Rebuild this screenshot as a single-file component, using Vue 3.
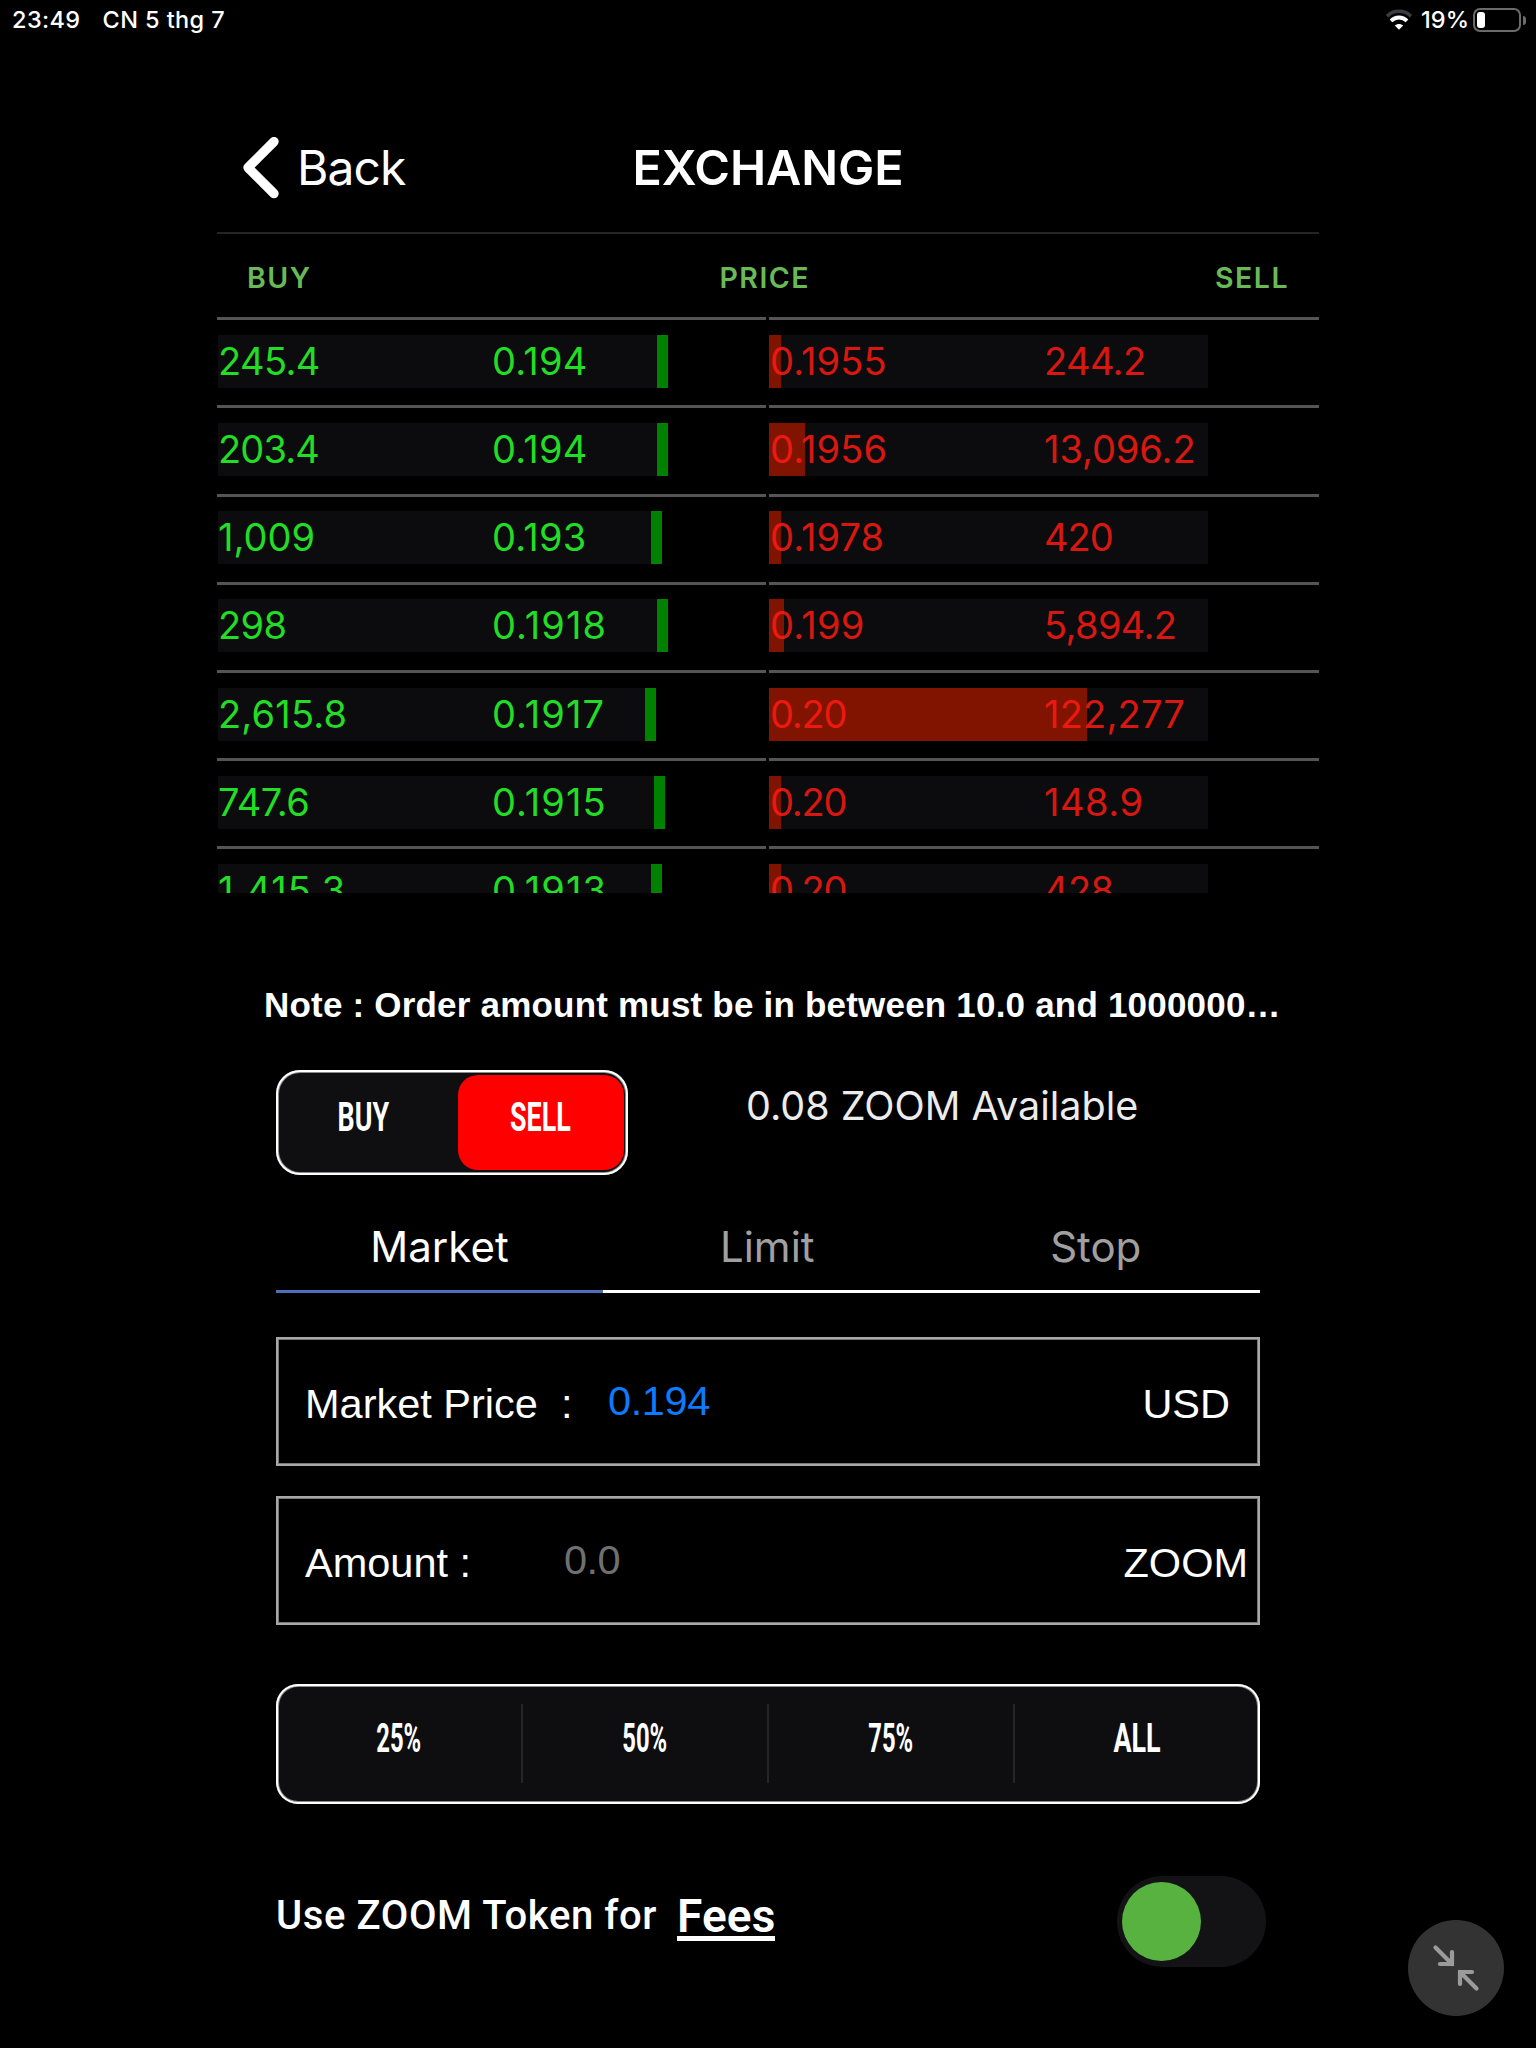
<template>
  <div class="screen">
    <div class="status-bar">
      <span class="status-time">23:49</span>
      <span class="status-date">CN 5 thg 7</span>
      <svg class="wifi" width="28" height="22" viewBox="0 0 28 22">
        <path d="M2 7.2 C8.5 0.6 19.5 0.6 26 7.2" fill="none" stroke="#3c3c3e" stroke-width="3.4" />
        <path d="M6 11.8 C10.5 7.4 17.5 7.4 22 11.8" fill="none" stroke="#fff" stroke-width="3.8" />
        <path d="M14 20.8 L9.8 16.6 C12 14.3 16 14.3 18.2 16.6 Z" fill="#fff" />
      </svg>
      <span class="status-percent">19%</span>
      <div class="battery"><div class="battery-level"></div></div>
      <div class="battery-cap"></div>
    </div>

    <div class="panel">
      <header class="nav">
        <button class="back">
          <svg width="38" height="62" viewBox="0 0 38 62">
            <path d="M33 4.6 L7 30.6 L33 56.6" fill="none" stroke="#fff" stroke-width="9.4" stroke-linecap="round" stroke-linejoin="round" />
          </svg>
          <span>Back</span>
        </button>
        <h1 class="title">EXCHANGE</h1>
      </header>

      <div class="book-head">
        <span>BUY</span>
        <span>PRICE</span>
        <span>SELL</span>
      </div>

      <div class="book">
        <div v-for="(row, i) in orders" :key="i" class="book-row">
          <div class="half">
            <div class="band buy" :style="{ width: row.buyWidth + 'px' }">
              <span class="first" :style="spacing(row.buyAmount)">{{ row.buyAmount }}</span>
              <span :style="spacing(row.buyPrice)">{{ row.buyPrice }}</span>
            </div>
          </div>
          <div class="half">
            <div class="band sell">
              <div class="depth" :style="{ width: row.depth + 'px' }"></div>
              <span class="first" :style="spacing(row.sellPrice)">{{ row.sellPrice }}</span>
              <span :style="spacing(row.sellAmount)">{{ row.sellAmount }}</span>
            </div>
          </div>
        </div>
      </div>
    </div>

    <p class="note">Note : Order amount must be in between 10.0 and 1000000…</p>

    <div class="form">
      <div class="side-row">
        <div class="side-switch">
          <button class="side-buy" :class="{ active: side === 'BUY' }" @click="side = 'BUY'"><span class="din">BUY</span></button>
          <button class="side-sell" :class="{ active: side === 'SELL' }" @click="side = 'SELL'"><span class="din">SELL</span></button>
        </div>
        <span class="available">0.08 ZOOM Available</span>
      </div>

      <div class="tabs">
        <button v-for="t in tabs" :key="t" :class="{ active: tab === t }" @click="tab = t">{{ t }}</button>
      </div>

      <div class="field">
        <span class="label price-label">Market Price&nbsp; :</span>
        <span class="value price">0.194</span>
        <span class="unit usd">USD</span>
      </div>
      <div class="field">
        <span class="label amount-label">Amount :</span>
        <span class="value amount">0.0</span>
        <span class="unit">ZOOM</span>
      </div>

      <div class="percents">
        <button v-for="p in percents" :key="p"><span class="din" :class="{ narrow: p !== 'ALL' }">{{ p }}</span></button>
      </div>

      <div class="fees-row">
        <span class="fees-text">Use ZOOM Token for</span>
        <a class="fees-link">Fees</a>
        <div class="toggle"><div class="knob"></div></div>
      </div>
    </div>

    <button class="shrink">
      <svg width="96" height="96" viewBox="0 0 96 96" fill="none" stroke="#9b9b9b" stroke-width="4.2" stroke-linecap="round">
        <path d="M27.5 27.5 L44 44 M44 32 V44 H32" />
        <path d="M68.5 68.5 L52 52 M64 52 H52 V64" />
      </svg>
    </button>
  </div>
</template>

<script setup>
import { ref } from 'vue'

const side = ref('SELL')
const tab = ref('Market')
const tabs = ['Market', 'Limit', 'Stop']
const percents = ['25%', '50%', '75%', 'ALL']

const orders = [
  { buyAmount: '245.4', buyPrice: '0.194', buyWidth: 450, sellPrice: '0.1955', sellAmount: '244.2', depth: 12 },
  { buyAmount: '203.4', buyPrice: '0.194', buyWidth: 450, sellPrice: '0.1956', sellAmount: '13,096.2', depth: 36 },
  { buyAmount: '1,009', buyPrice: '0.193', buyWidth: 444, sellPrice: '0.1978', sellAmount: '420', depth: 12 },
  { buyAmount: '298', buyPrice: '0.1918', buyWidth: 450, sellPrice: '0.199', sellAmount: '5,894.2', depth: 15 },
  { buyAmount: '2,615.8', buyPrice: '0.1917', buyWidth: 438, sellPrice: '0.20', sellAmount: '122,277', depth: 318 },
  { buyAmount: '747.6', buyPrice: '0.1915', buyWidth: 447, sellPrice: '0.20', sellAmount: '148.9', depth: 12 },
  { buyAmount: '1,415.3', buyPrice: '0.1913', buyWidth: 444, sellPrice: '0.20', sellAmount: '428', depth: 12 }
]

// 1 is narrow and 0 is wide in Inter, even the numbers out a little
function spacing(text) {
  const ones = text.split('1').length - 1
  const zeros = text.split('0').length - 1
  return { letterSpacing: (-0.6 + (5.6 * ones - 1.2 * zeros) / text.length).toFixed(2) + 'px' }
}
</script>

<style>
body {
  margin: 0;
  background: #000;
}
</style>

<style scoped>
.screen {
  position: relative;
  width: 1536px;
  height: 2048px;
  box-sizing: border-box;
  overflow: hidden;
  background: #000;
  color: #fff;
  font-family: Inter, "Liberation Sans", sans-serif;
}

.screen * {
  box-sizing: border-box;
}

button {
  margin: 0;
  padding: 0;
  border: 0;
  background: none;
  color: inherit;
  font: inherit;
  letter-spacing: inherit;
}

span,
a {
  white-space: nowrap;
}

.status-bar {
  display: flex;
  align-items: center;
  height: 40px;
  padding: 0 10px 0 12px;
  font-size: 23.5px;
  font-weight: 500;
  letter-spacing: 0.4px;
}

.status-bar span {
  padding-bottom: 1px;
}

.status-date {
  margin-left: 22px;
}

.wifi {
  margin-left: auto;
}

.status-bar .status-percent {
  margin-left: 8px;
  letter-spacing: 0;
}

.battery {
  width: 48px;
  height: 24px;
  margin-left: 4px;
  padding: 2px;
  border: 2px solid #6b6b6d;
  border-radius: 7px;
}

.battery-level {
  width: 8px;
  height: 16px;
  border-radius: 3px;
  background: #fff;
}

.battery-cap {
  width: 3px;
  height: 9px;
  margin-left: 2px;
  border-radius: 0 4px 4px 0;
  background: #6b6b6d;
}

.panel {
  width: 1102px;
  margin: 0 auto;
}

.nav {
  display: grid;
  grid-template-columns: 1fr auto 1fr;
  align-items: center;
  height: 194px;
  padding-top: 63px;
  border-bottom: 2px solid #242424;
}

.nav .back {
  display: flex;
  align-items: center;
  gap: 18px;
  padding-left: 24px;
  font-size: 48px;
  letter-spacing: -0.9px;
}

.title {
  margin: 0;
  font-size: 48.5px;
  font-weight: 600;
  line-height: 62px;
  letter-spacing: -0.1px;
}

.book-head {
  display: flex;
  justify-content: space-between;
  align-items: center;
  height: 83px;
  padding: 4px 30px 0 30px;
  color: #69b957;
  font-size: 28.5px;
  font-weight: 600;
  letter-spacing: 1.5px;
}

.book-head span:nth-child(2) {
  padding-left: 3px;
}

.book {
  height: 576px;
  padding-top: 0.2px;
  overflow: hidden;
}

.book-row {
  display: grid;
  grid-template-columns: 549px 550px;
  gap: 3px;
  height: 88.166px;
}

.half {
  border-top: 3px solid #555;
  padding: 14.7px 0 0 1px;
}

.half + .half {
  padding-left: 0;
}

.band {
  position: relative;
  display: flex;
  height: 53px;
  line-height: 53px;
  background: #0c0c0e;
  font-size: 38px;
}

.band .first {
  width: 274px;
}

.band span {
  position: relative;
}

.buy {
  color: #22dc26;
  border-right: 11px solid #008200;
}

.sell {
  width: 439px;
  padding-left: 1px;
  color: rgba(255, 26, 18, 0.86);
}

.sell .depth {
  position: absolute;
  left: 0;
  top: 0;
  height: 100%;
  background: #801400;
}

.note {
  height: 46px;
  margin: 89px 0 0 264px;
  font-family: "Liberation Sans", Arial, sans-serif;
  font-size: 35px;
  font-weight: 700;
  line-height: 46px;
  letter-spacing: 0.2px;
}

.form {
  width: 984px;
  margin: 42px auto 0;
}

.side-row {
  display: flex;
  height: 105px;
}

.side-switch {
  display: flex;
  width: 352px;
  padding: 5px 4px;
  border-radius: 24px;
  background: #0f0f11;
  box-shadow: inset 0 0 0 2px #fff, inset 0 0 0 3px #8a8a8a;
}

.side-switch button {
  height: 95px;
  border-radius: 20px;
  padding-bottom: 12px;
}

.side-switch .side-buy {
  width: 178px;
  padding-right: 12px;
}

.side-switch .side-sell {
  width: 166px;
  padding-right: 2px;
}

.side-switch .active {
  background: #fe0000;
}

.din {
  display: inline-block;
  font-family: Roboto, sans-serif;
  font-size: 41px;
  font-weight: 700;
  line-height: 50px;
  transform: scaleX(0.655);
}

.din.narrow {
  transform: scaleX(0.58);
}

.available {
  margin-left: 118px;
  color: #ececec;
  font-size: 39.5px;
  line-height: 73px;
}

.tabs {
  display: grid;
  grid-template-columns: 327px 1fr 1fr;
  height: 78px;
  margin-top: 40px;
}

.tabs button {
  border-bottom: 3px solid #fff;
  color: #a0a0a0;
  font-size: 42px;
  line-height: 63px;
  padding-bottom: 12px;
}

.tabs .active {
  border-color: #4f6fb8;
  color: #fff;
}

.field {
  display: flex;
  height: 129px;
  margin-top: 44px;
  padding-left: 29px;
  box-shadow: inset 0 0 0 2px #a8a8a8, inset 0 0 0 3px #787878;
  font-family: "Liberation Sans", Arial, sans-serif;
  font-size: 41.5px;
  line-height: 134px;
}

.field + .field {
  margin-top: 30px;
}

.price-label {
  width: 303px;
}

.amount-label {
  width: 259px;
}

.value {
  line-height: 127px;
}

.price {
  color: #0d7bff;
  letter-spacing: -0.4px;
}

.amount {
  color: #707070;
  letter-spacing: -0.5px;
}

.unit {
  margin-left: auto;
  padding-right: 12px;
}

.usd {
  padding-right: 30px;
}

.percents {
  display: flex;
  height: 120px;
  margin-top: 59px;
  border-radius: 22px;
  background: #0e0e11;
  box-shadow: inset 0 0 0 2px #fff, inset 0 0 0 3px #8a8a8a;
}

.percents button {
  position: relative;
  flex: 1;
  padding: 0 0 13px 0;
}

.percents button + button::before {
  content: "";
  position: absolute;
  left: -1px;
  top: 20px;
  width: 2px;
  height: 79px;
  background: #252529;
}

.fees-row {
  display: flex;
  align-items: flex-start;
  margin: 72px -6px 0 0;
  font-family: Roboto, sans-serif;
}

.fees-text {
  font-size: 40px;
  font-weight: 500;
  line-height: 79px;
  letter-spacing: 0.6px;
}

.fees-link {
  margin: 33px 0 0 20px;
  border-bottom: 5px solid #fff;
  font-size: 46px;
  font-weight: 600;
  height: 32px;
  line-height: 14px;
  letter-spacing: 0.1px;
}

.toggle {
  width: 149px;
  height: 91px;
  margin-left: auto;
  padding: 6px 5px;
  border-radius: 46px;
  background: #131316;
}

.knob {
  width: 79px;
  height: 79px;
  border-radius: 50%;
  background: #58b240;
}

.shrink {
  position: absolute;
  right: 32px;
  bottom: 32px;
  width: 96px;
  height: 96px;
  border-radius: 50%;
  background: #333;
}

.shrink svg {
  display: block;
}
</style>
